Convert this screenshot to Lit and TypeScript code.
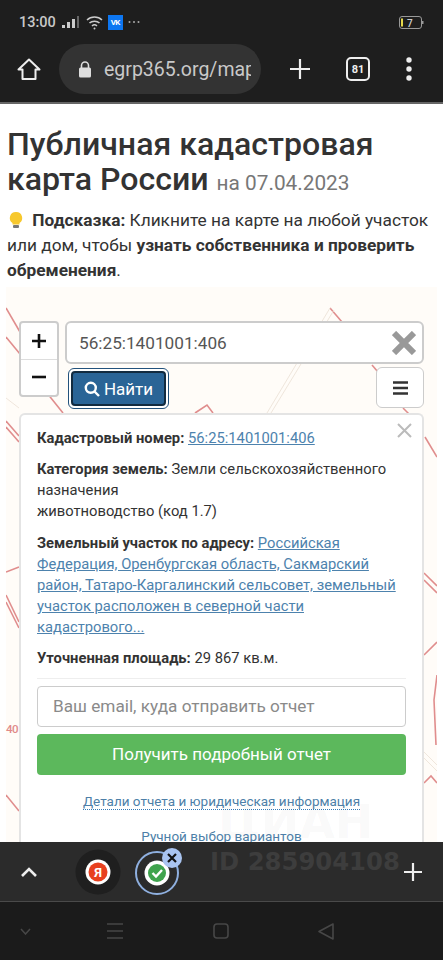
import { LitElement, html, css, svg } from "lit";
import { customElement } from "lit/decorators.js";

const red = [
  "6,308 20,332", "6,337 20,354", "47,393 63,413", "6,421 19,436", "6,427 19,442",
  "6,572 19,567", "6,595 19,622", "6,602 19,628", "6,795 19,811",
  "330,308 342,322", "372,365 378,372", "195,413 207,405 213,413", "403,408 410,415",
  "425,437 437,457", "424,573 437,586", "424,580 437,593", "424,655 437,642",
  "437,675 434,700 436,745", "424,783 431,776 437,783",
];
const beige = ["330,308 267,413", "334,310 271,413", "6,398 19,408", "424,752 437,765", "424,758 437,771"];

@customElement("app-root")
export class AppRoot extends LitElement {
  static styles = css`
    :host { display: block; position: relative; width: 443px; height: 960px; overflow: hidden; background: #fff; font-family: Roboto, "Noto Sans", sans-serif; }
    .page { display: flex; flex-direction: column; height: 960px; }
    .top { background: #1e1e1e; height: 102px; flex: none; border-bottom: 2px solid #666; box-sizing: content-box; }
    .status { display: flex; align-items: center; height: 44px; padding: 0 19px; color: #c8c8c8; font-size: 14.5px; font-weight: 500; }
    .status svg { display: block; flex: none; }
    .sig { margin-left: 6px; }
    .wifi { margin-left: 6px; }
    .vk { margin-left: 5px; width: 15px; height: 15px; background: #0d77f2; color: #fff; font-size: 8px; font-weight: 700; display: flex; align-items: center; justify-content: center; letter-spacing: -0.5px; }
    .more { margin-left: 5px; }
    .batt { margin-left: auto; }
    .bar { display: flex; align-items: center; height: 50px; padding-left: 17px; }
    .pill { margin-left: 18px; width: 202px; height: 50px; box-sizing: border-box; border-radius: 25px; background: #333; display: flex; align-items: center; padding: 0 10px 0 19px; color: #c9c9c9; font-size: 19.5px; flex: none; }
    .url { margin-left: 12px; overflow: hidden; white-space: nowrap; }
    .plus { margin-left: 29px; }
    .tab { margin-left: 36px; width: 20px; height: 20px; border: 2px solid #eee; border-radius: 5px; color: #eee; font-size: 11px; font-weight: 700; display: flex; align-items: center; justify-content: center; }
    .dots { margin-left: 36px; }
    .content { flex: 1; min-height: 0; overflow: hidden; padding: 23px 6px 0; color: #333; }
    h1 { margin: 0 0 0 1px; font-size: 32.1px; line-height: 35px; font-weight: 500; color: #333; }
    h1 small { font-size: 20.8px; font-weight: 400; color: #777; }
    p.hint { margin: 6.5px 0 0 1px; height: 79.5px; font-size: 17.3px; line-height: 25px; color: #333; }
    p.hint b { font-weight: 700; }
    .bulb { display: inline-block; vertical-align: -3px; margin-right: 3px; }
    .map { position: relative; height: 555px; background: #fffcf8; }
    .lines { position: absolute; left: 0; top: 0; width: 431px; height: 555px; }
    .num { position: absolute; left: 0; top: 435px; font-size: 11.5px; letter-spacing: -0.5px; font-weight: 500; color: #e08a8a; }
    .over { position: absolute; inset: 0; padding: 34px 13px 0 13px; display: grid; grid-template-columns: 40px 1fr; grid-template-rows: 43px 46px auto; column-gap: 6px; }
    .zoom { grid-row: 1 / span 2; box-sizing: border-box; height: 76px; width: 40px; border: 2px solid #ccc; border-radius: 4px; background: #fff; display: flex; flex-direction: column; align-items: center; color: #111; }
    .zoom span { flex: 1; width: 100%; display: flex; align-items: center; justify-content: center; }
    .zoom span + span { border-top: 1px solid #ddd; }
    .field { box-sizing: border-box; height: 43px; border: 2px solid #ccc; border-radius: 6px; background: #fff; display: flex; align-items: center; justify-content: space-between; padding: 0 6px 0 12px; font-size: 17.2px; color: #555; }
    .row { grid-column: 2; display: flex; justify-content: space-between; align-items: flex-start; padding: 4px 0 0 3px; }
    .find { box-sizing: border-box; width: 101px; height: 41px; border: 1px solid #23527c; border-radius: 6px; padding: 2px; background: #fff; }
    .find div { height: 100%; box-sizing: border-box; background: #2a6496; border: 2px solid #122b40; border-radius: 4px; color: #fff; font-size: 17px; display: flex; align-items: center; justify-content: center; gap: 4px; }
    .menu { box-sizing: border-box; width: 48px; height: 41px; border: 1px solid #ccc; border-radius: 6px; background: #fff; display: flex; align-items: center; justify-content: center; margin-top: -1px; }
    .popup { grid-column: 1 / span 2; position: relative; box-sizing: border-box; margin-top: 3px; height: 430px; background: #fff; border: 2px solid #e4e4e4; border-bottom: none; border-radius: 6px 6px 0 0; padding: 13px 16px 0 16px; font-size: 14.75px; line-height: 21px; color: #333; }
    .popup b { font-weight: 700; }
    .popup p { margin: 0 0 10.4px; }
    .popup a { color: #4d82ad; text-decoration: underline; }
    .x { position: absolute; right: 10px; top: 8px; }
    hr { border: none; border-top: 1px solid #eee; margin: -2px 0 7px; }
    .email { box-sizing: border-box; height: 41px; border: 1px solid #ccc; border-radius: 4px; display: flex; align-items: center; padding: 0 15px; font-size: 17.2px; color: #8a8a8a; }
    .go { box-sizing: border-box; height: 41px; margin-top: 7px; border-radius: 4px; background: #5cb85c; color: #fff; font-size: 17px; display: flex; align-items: center; justify-content: center; }
    .details { text-align: center; margin-top: 16px; font-size: 13.5px; }
    .details span { color: #4d7fa8; border-bottom: 1px dotted #337ab7; }
    .manual { text-align: center; margin-top: 14px; color: #4d7fa8; font-size: 13.5px; }
    .tabs { flex: none; height: 60px; background: #2b2b2b; border-bottom: 1px solid #4a4a4a; box-sizing: border-box; display: flex; align-items: center; padding: 0 21px 0 20px; }
    .tabs svg { display: block; flex: none; }
    .tabs .ya { margin-left: 37px; }
    .tabs .ok { margin-left: 14px; margin-top: -6px; }
    .tabs .add { margin-left: auto; }
    .ya text { font-family: Roboto, sans-serif; font-size: 13px; font-weight: 700; fill: #fff; }
    .nav { flex: none; height: 58px; background: #1b1b1b; display: flex; align-items: center; padding-left: 20px; }
    .nav svg { display: block; flex: none; }
    .mark { position: absolute; left: 210px; top: 845px; font-family: "DejaVu Sans", sans-serif; font-weight: 700; font-size: 24.3px; line-height: 34px; color: #3d3d3d; white-space: nowrap; }
    .mark2 { position: absolute; left: 218px; top: 795px; font-family: "DejaVu Sans", sans-serif; font-weight: 700; font-size: 46px; line-height: 54px; color: rgba(120, 120, 120, 0.045); white-space: nowrap; }
  `;

  render() {
    return html`
      <div class="page">
        <div class="top">
          <div class="status">
            <span>13:00</span>
            <svg class="sig" width="18" height="12" viewBox="0 0 18 12"><rect x="0" y="9" width="3" height="3" fill="#ccc"/><rect x="5" y="6" width="3" height="6" fill="#ccc"/><rect x="10" y="3" width="3" height="9" fill="#ccc"/><rect x="15" y="0" width="2" height="12" fill="#666"/></svg>
            <svg class="wifi" width="17" height="15" viewBox="0 0 17 15" fill="none" stroke="#ccc" stroke-width="1.5"><path d="M1 5 C5 1 12 1 16 5"/><path d="M3.5 8 C6 5.5 11 5.5 13.5 8"/><path d="M6 11 C7.5 9.6 9.5 9.6 11 11"/><circle cx="8.5" cy="13.5" r="1" fill="#ccc" stroke="none"/></svg>
            <div class="vk">VK</div>
            <svg class="more" width="12" height="4" viewBox="0 0 12 4" fill="#aaa"><circle cx="1.5" cy="2" r="1"/><circle cx="6" cy="2" r="1"/><circle cx="10.5" cy="2" r="1"/></svg>
            <svg class="batt" width="25" height="13" viewBox="0 0 25 13" fill="none"><rect x=".5" y=".5" width="22" height="12" rx="2.5" stroke="#999"/><rect x="23" y="5" width="1.5" height="3" fill="#999"/><rect x="2" y="2.5" width="2" height="8" fill="#e5d84a"/><text x="8" y="10.5" font-family="Roboto, sans-serif" font-size="10" font-weight="500" fill="#ccc">7</text></svg>
          </div>
          <div class="bar">
            <svg width="24" height="24" viewBox="0 0 24 24" fill="none" stroke="#eee" stroke-width="2" stroke-linejoin="round"><path d="M1.5 12.5 L12 2.5 L22.5 12.5 H18.5 V22 H5.5 V12.5 Z"/></svg>
            <div class="pill">
              <svg width="14" height="17" viewBox="0 0 14 17" fill="#ddd" style="flex:none"><path d="M3.5 7 V4.5 A3.5 3.5 0 0 1 10.5 4.5 V7" fill="none" stroke="#ddd" stroke-width="1.6"/><rect x="1" y="6.5" width="12" height="10" rx="1.5"/></svg>
              <span class="url">egrp365.org/map</span>
            </div>
            <svg class="plus" width="20" height="20" viewBox="0 0 20 20" stroke="#eee" stroke-width="2.2"><path d="M10 0 V20 M0 10 H20"/></svg>
            <div class="tab">81</div>
            <svg class="dots" width="6" height="24" viewBox="0 0 6 24" fill="#eee"><circle cx="3" cy="3" r="2.7"/><circle cx="3" cy="12" r="2.7"/><circle cx="3" cy="21" r="2.7"/></svg>
          </div>
        </div>
        <div class="content">
          <h1>Публичная кадастровая карта России <small>на 07.04.2023</small></h1>
          <p class="hint"><svg class="bulb" width="18" height="18" viewBox="0 0 18 18"><path d="M9 1 A6 6 0 0 1 12.5 12 V13.5 H5.5 V12 A6 6 0 0 1 9 1 Z" fill="#f7c82d"/><rect x="6" y="14" width="6" height="3" rx="1" fill="#777"/></svg> <b>Подсказка:</b> Кликните на карте на любой участок или дом, чтобы <b>узнать собственника и проверить обременения</b>.</p>
          <div class="map">
            <svg class="lines" viewBox="6 287 431 555" fill="none">
              ${red.map((p) => svg`<polyline points=${p} stroke="#e08d8d" stroke-width="1.6"/>`)}
              ${beige.map((p) => svg`<polyline points=${p} stroke="#efe6dc" stroke-width="1"/>`)}
            </svg>
            <div class="num">40</div>
            <div class="over">
              <div class="zoom">
                <span><svg width="14" height="14" viewBox="0 0 14 14" stroke="#111" stroke-width="2.6"><path d="M7 0 V14 M0 7 H14"/></svg></span>
                <span><svg width="14" height="4" viewBox="0 0 14 4" stroke="#111" stroke-width="2.6"><path d="M0 2 H14"/></svg></span>
              </div>
              <div class="field">
                <span>56:25:1401001:406</span>
                <svg width="24" height="24" viewBox="0 0 24 24" stroke="#999" stroke-width="6"><path d="M2 2 L22 22 M22 2 L2 22"/></svg>
              </div>
              <div class="row">
                <div class="find"><div>
                  <svg width="16" height="16" viewBox="0 0 16 16" fill="none" stroke="#fff" stroke-width="2.4"><circle cx="6.8" cy="6.8" r="5"/><path d="M10.5 10.5 L15 15"/></svg>
                  <span>Найти</span>
                </div></div>
                <div class="menu"><svg width="15" height="14" viewBox="0 0 15 14" stroke="#333" stroke-width="2.6"><path d="M0 1.5 H15 M0 7 H15 M0 12.5 H15"/></svg></div>
              </div>
              <div class="popup">
                <svg class="x" width="15" height="15" viewBox="0 0 15 15" stroke="#bbb" stroke-width="2"><path d="M1 1 L14 14 M14 1 L1 14"/></svg>
                <p><b>Кадастровый номер:</b> <a>56:25:1401001:406</a></p>
                <p><b>Категория земель:</b> Земли сельскохозяйственного назначения<br />животноводство (код 1.7)</p>
                <p><b>Земельный участок по адресу:</b> <a>Российская Федерация, Оренбургская область, Сакмарский район, Татаро-Каргалинский сельсовет, земельный участок расположен в северной части кадастрового...</a></p>
                <p><b>Уточненная площадь:</b> 29 867 кв.м.</p>
                <hr />
                <div class="email">Ваш email, куда отправить отчет</div>
                <div class="go">Получить подробный отчет</div>
                <div class="details"><span>Детали отчета и юридическая информация</span></div>
                <div class="manual">Ручной выбор вариантов</div>
              </div>
            </div>
          </div>
        </div>
        <div class="tabs">
          <svg width="18" height="12" viewBox="0 0 18 12" fill="none" stroke="#eee" stroke-width="2.6"><path d="M2 10 L9 3 L16 10"/></svg>
          <svg class="ya" width="46" height="46" viewBox="0 0 46 46"><circle cx="23" cy="23" r="22.5" fill="#1f1f1f"/><circle cx="23" cy="23" r="12.5" fill="#fff"/><circle cx="23" cy="23" r="9.5" fill="#e8401f"/><text x="23" y="27.5" text-anchor="middle">Я</text></svg>
          <svg class="ok" width="50" height="52" viewBox="0 0 50 52" fill="none"><circle cx="22" cy="30" r="21" stroke="#8fb0e0" stroke-width="2"/><circle cx="22" cy="30" r="12.5" fill="#fff"/><circle cx="22" cy="30" r="9" fill="#3fa34d"/><path d="M17.5 30 L21 33.5 L27 27" stroke="#fff" stroke-width="2.4"/><circle cx="37" cy="15" r="10" fill="#a9c4f0"/><path d="M33 11 L41 19 M41 11 L33 19" stroke="#111" stroke-width="2.2"/></svg>
          <svg class="add" width="18" height="18" viewBox="0 0 18 18" stroke="#eee" stroke-width="2.2"><path d="M9 0 V18 M0 9 H18"/></svg>
        </div>
        <div class="nav">
          <svg width="11" height="7" viewBox="0 0 11 7" fill="none" stroke="#474747" stroke-width="1.5"><path d="M1 1 L5.5 6 L10 1"/></svg>
          <svg style="margin-left:76px" width="16" height="16" viewBox="0 0 16 16" stroke="#474747" stroke-width="1.5"><path d="M0 1 H16 M0 8 H16 M0 15 H16"/></svg>
          <svg style="margin-left:90px" width="16" height="16" viewBox="0 0 16 16" fill="none" stroke="#474747" stroke-width="1.6"><rect x="1" y="1" width="14" height="14" rx="3"/></svg>
          <svg style="margin-left:89px" width="16" height="17" viewBox="0 0 16 17" fill="none" stroke="#474747" stroke-width="1.6" stroke-linejoin="round"><path d="M15 1 V16 L1 8.5 Z"/></svg>
        </div>
      </div>
      <div class="mark2">ЦИАН</div>
      <div class="mark">ID 285904108</div>
    `;
  }
}
